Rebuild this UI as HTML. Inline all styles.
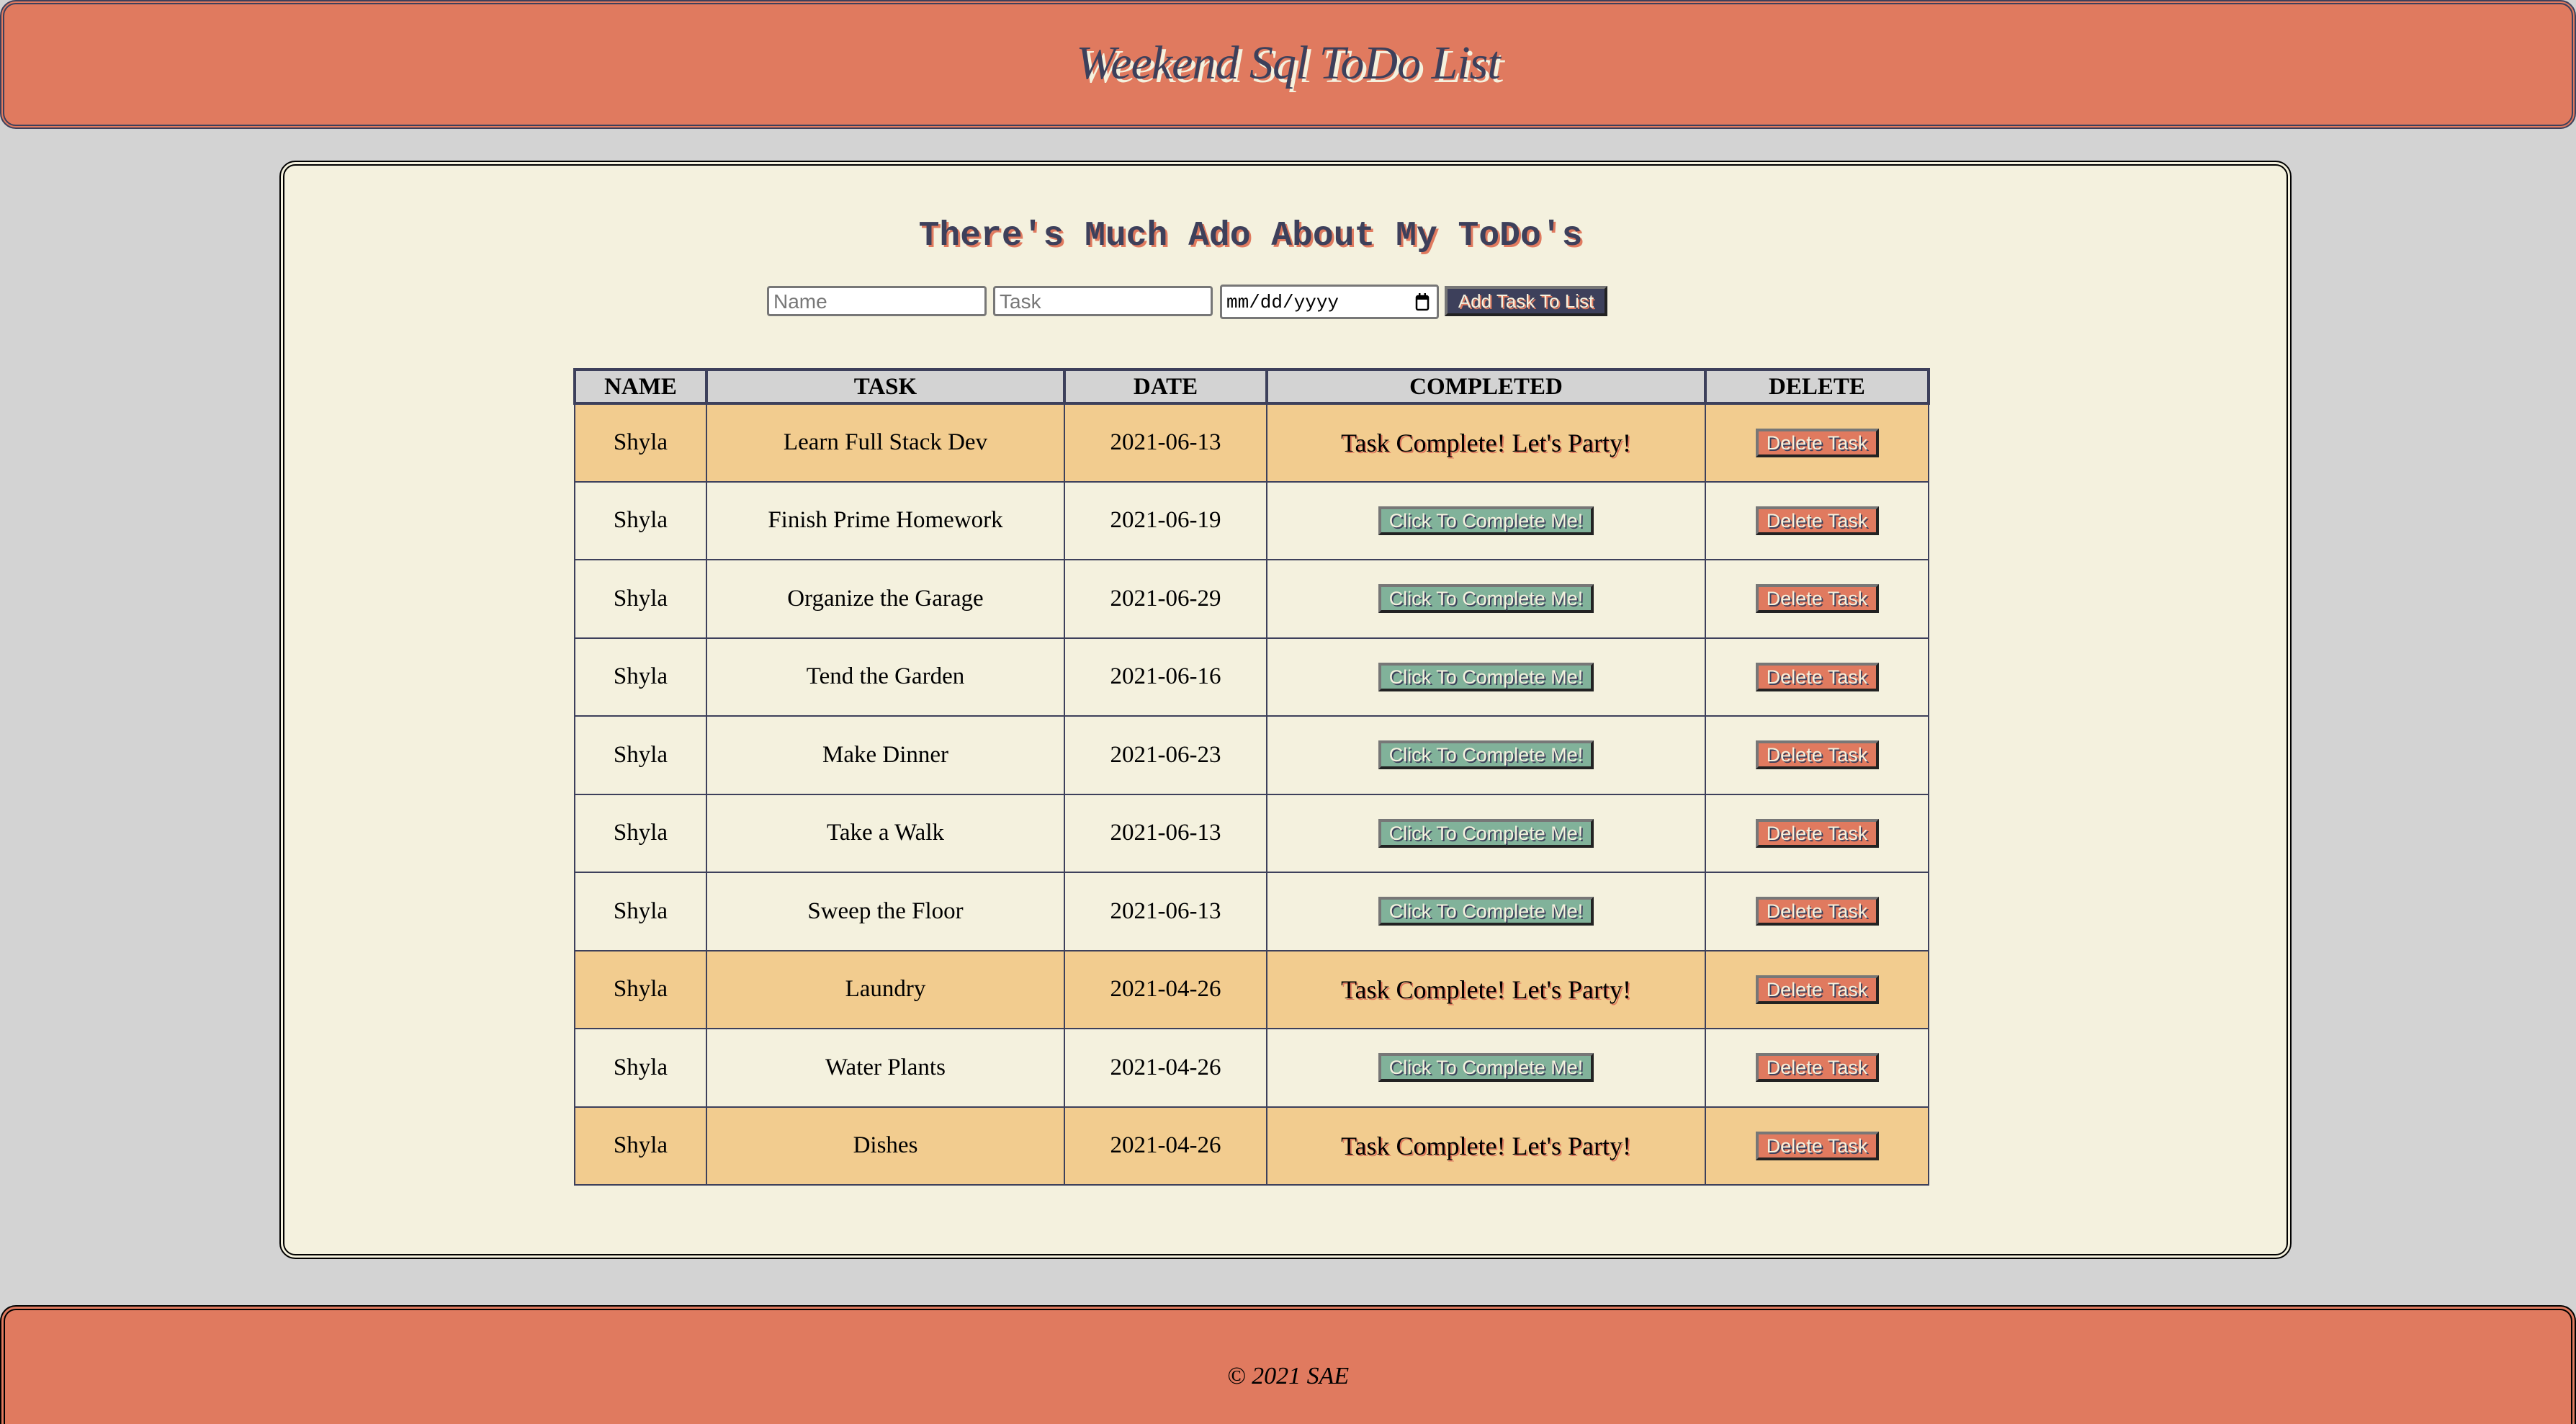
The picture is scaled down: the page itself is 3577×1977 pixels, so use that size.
<!DOCTYPE html>
<html><head><meta charset="utf-8"><style>
*{box-sizing:border-box;margin:0;padding:0}
html,body{width:3577px;height:1977px;overflow:hidden;background:#d3d3d3;font-family:"Liberation Serif",serif}
.hdr{position:absolute;left:0;top:0;width:3577px;height:179px;background:#e07a5f;border:6px double #3d405b;border-radius:22px}
.hdr h1{position:absolute;left:0;right:0;top:44px;text-align:center;font-family:"Liberation Serif",serif;font-style:italic;font-weight:normal;font-size:66px;color:#3d405b;text-shadow:5px 5px 0 #f4f1de;letter-spacing:-1px}
.main{position:absolute;left:388px;top:223px;width:2794px;height:1525px;background:#f4f1de;border:7px double #000;border-radius:22px}
h2{position:absolute;left:-52px;width:3577px;top:298px;text-align:center;font-family:"Liberation Mono",monospace;font-weight:bold;font-size:48px;line-height:60px;color:#3d405b;text-shadow:3px 3px 0 #e07a5f}
.inp{position:absolute;top:397px;height:42px;background:#fff;border:3px solid #777;border-radius:4px;font-family:"Liberation Sans",sans-serif;font-size:28px;color:#777;padding:4px 6px;line-height:30px}
.addb{position:absolute;left:2006px;top:397px;width:226px;height:42px;background:#3d405b;border-style:solid;border-width:4px;border-color:#777 #222 #222 #777;color:#f4f1de;font-family:"Liberation Sans",sans-serif;font-size:26px;text-align:center;line-height:34px;text-shadow:2px 2px 0 #e07a5f}
table{position:absolute;left:796px;top:511px;width:1880px;border-collapse:collapse;table-layout:fixed}
th{background:#d3d3d3;border:4px solid #3d405b;height:47px;font-size:33px;font-weight:bold;color:#000;line-height:36px}
td{border:2px solid #3d405b;height:108.5px;text-align:center;font-size:33px;color:#000;background:#f4f1de}
tr.c td{background:#f2cc8f}
.party{font-size:36px;text-shadow:2px 2px 0 #e07a5f}
.btn{display:inline-block;border-style:solid;border-width:4px;border-color:#777 #222 #222 #777;font-family:"Liberation Sans",sans-serif;font-size:27px;color:#f4f1de;text-shadow:2px 2px 0 #3d405b;height:40px;line-height:32px;vertical-align:middle}
.g{background:#81b29a;width:299px}
.d{background:#e07a5f;width:171px}
.ftr{position:absolute;left:0;top:1812px;width:3577px;height:165px;background:#e07a5f;border:7px double #000;border-bottom:none;border-radius:22px 22px 0 0}
.ftr p{position:absolute;left:0;top:73px;width:3563px;text-align:center;font-style:italic;font-size:34px;color:#000}
</style></head><body>
<div class="hdr"><h1>Weekend Sql ToDo List</h1></div>
<div class="main"></div>
<h2>There's Much Ado About My ToDo's</h2>
<div class="inp" style="left:1065px;width:305px">Name</div>
<div class="inp" style="left:1379px;width:305px">Task</div>
<div class="inp" style="left:1694px;top:395px;width:304px;height:48px;color:#000;font-family:'Liberation Mono',monospace;font-size:26px;line-height:36px">mm/dd/yyyy<svg style="position:absolute;right:10px;top:8px" width="20" height="26" viewBox="0 0 20 26"><rect x="2" y="5" width="16" height="19" rx="2" fill="none" stroke="#000" stroke-width="2.5"/><rect x="2" y="5" width="16" height="5" fill="#000"/><rect x="5" y="1" width="2.5" height="6" fill="#000"/><rect x="12.5" y="1" width="2.5" height="6" fill="#000"/></svg></div>
<div class="addb">Add Task To List</div>
<table>
<colgroup><col style="width:183px"><col style="width:497px"><col style="width:281px"><col style="width:609px"><col style="width:310px"></colgroup>
<tr><th>NAME</th><th>TASK</th><th>DATE</th><th>COMPLETED</th><th>DELETE</th></tr>
<tr class="c"><td>Shyla</td><td>Learn Full Stack Dev</td><td>2021-06-13</td><td class="party">Task Complete! Let's Party!</td><td><span class="btn d">Delete Task</span></td></tr>
<tr><td>Shyla</td><td>Finish Prime Homework</td><td>2021-06-19</td><td><span class="btn g">Click To Complete Me!</span></td><td><span class="btn d">Delete Task</span></td></tr>
<tr><td>Shyla</td><td>Organize the Garage</td><td>2021-06-29</td><td><span class="btn g">Click To Complete Me!</span></td><td><span class="btn d">Delete Task</span></td></tr>
<tr><td>Shyla</td><td>Tend the Garden</td><td>2021-06-16</td><td><span class="btn g">Click To Complete Me!</span></td><td><span class="btn d">Delete Task</span></td></tr>
<tr><td>Shyla</td><td>Make Dinner</td><td>2021-06-23</td><td><span class="btn g">Click To Complete Me!</span></td><td><span class="btn d">Delete Task</span></td></tr>
<tr><td>Shyla</td><td>Take a Walk</td><td>2021-06-13</td><td><span class="btn g">Click To Complete Me!</span></td><td><span class="btn d">Delete Task</span></td></tr>
<tr><td>Shyla</td><td>Sweep the Floor</td><td>2021-06-13</td><td><span class="btn g">Click To Complete Me!</span></td><td><span class="btn d">Delete Task</span></td></tr>
<tr class="c"><td>Shyla</td><td>Laundry</td><td>2021-04-26</td><td class="party">Task Complete! Let's Party!</td><td><span class="btn d">Delete Task</span></td></tr>
<tr><td>Shyla</td><td>Water Plants</td><td>2021-04-26</td><td><span class="btn g">Click To Complete Me!</span></td><td><span class="btn d">Delete Task</span></td></tr>
<tr class="c"><td>Shyla</td><td>Dishes</td><td>2021-04-26</td><td class="party">Task Complete! Let's Party!</td><td><span class="btn d">Delete Task</span></td></tr>
</table>
<div class="ftr"><p>© 2021 SAE</p></div>
</body></html>
